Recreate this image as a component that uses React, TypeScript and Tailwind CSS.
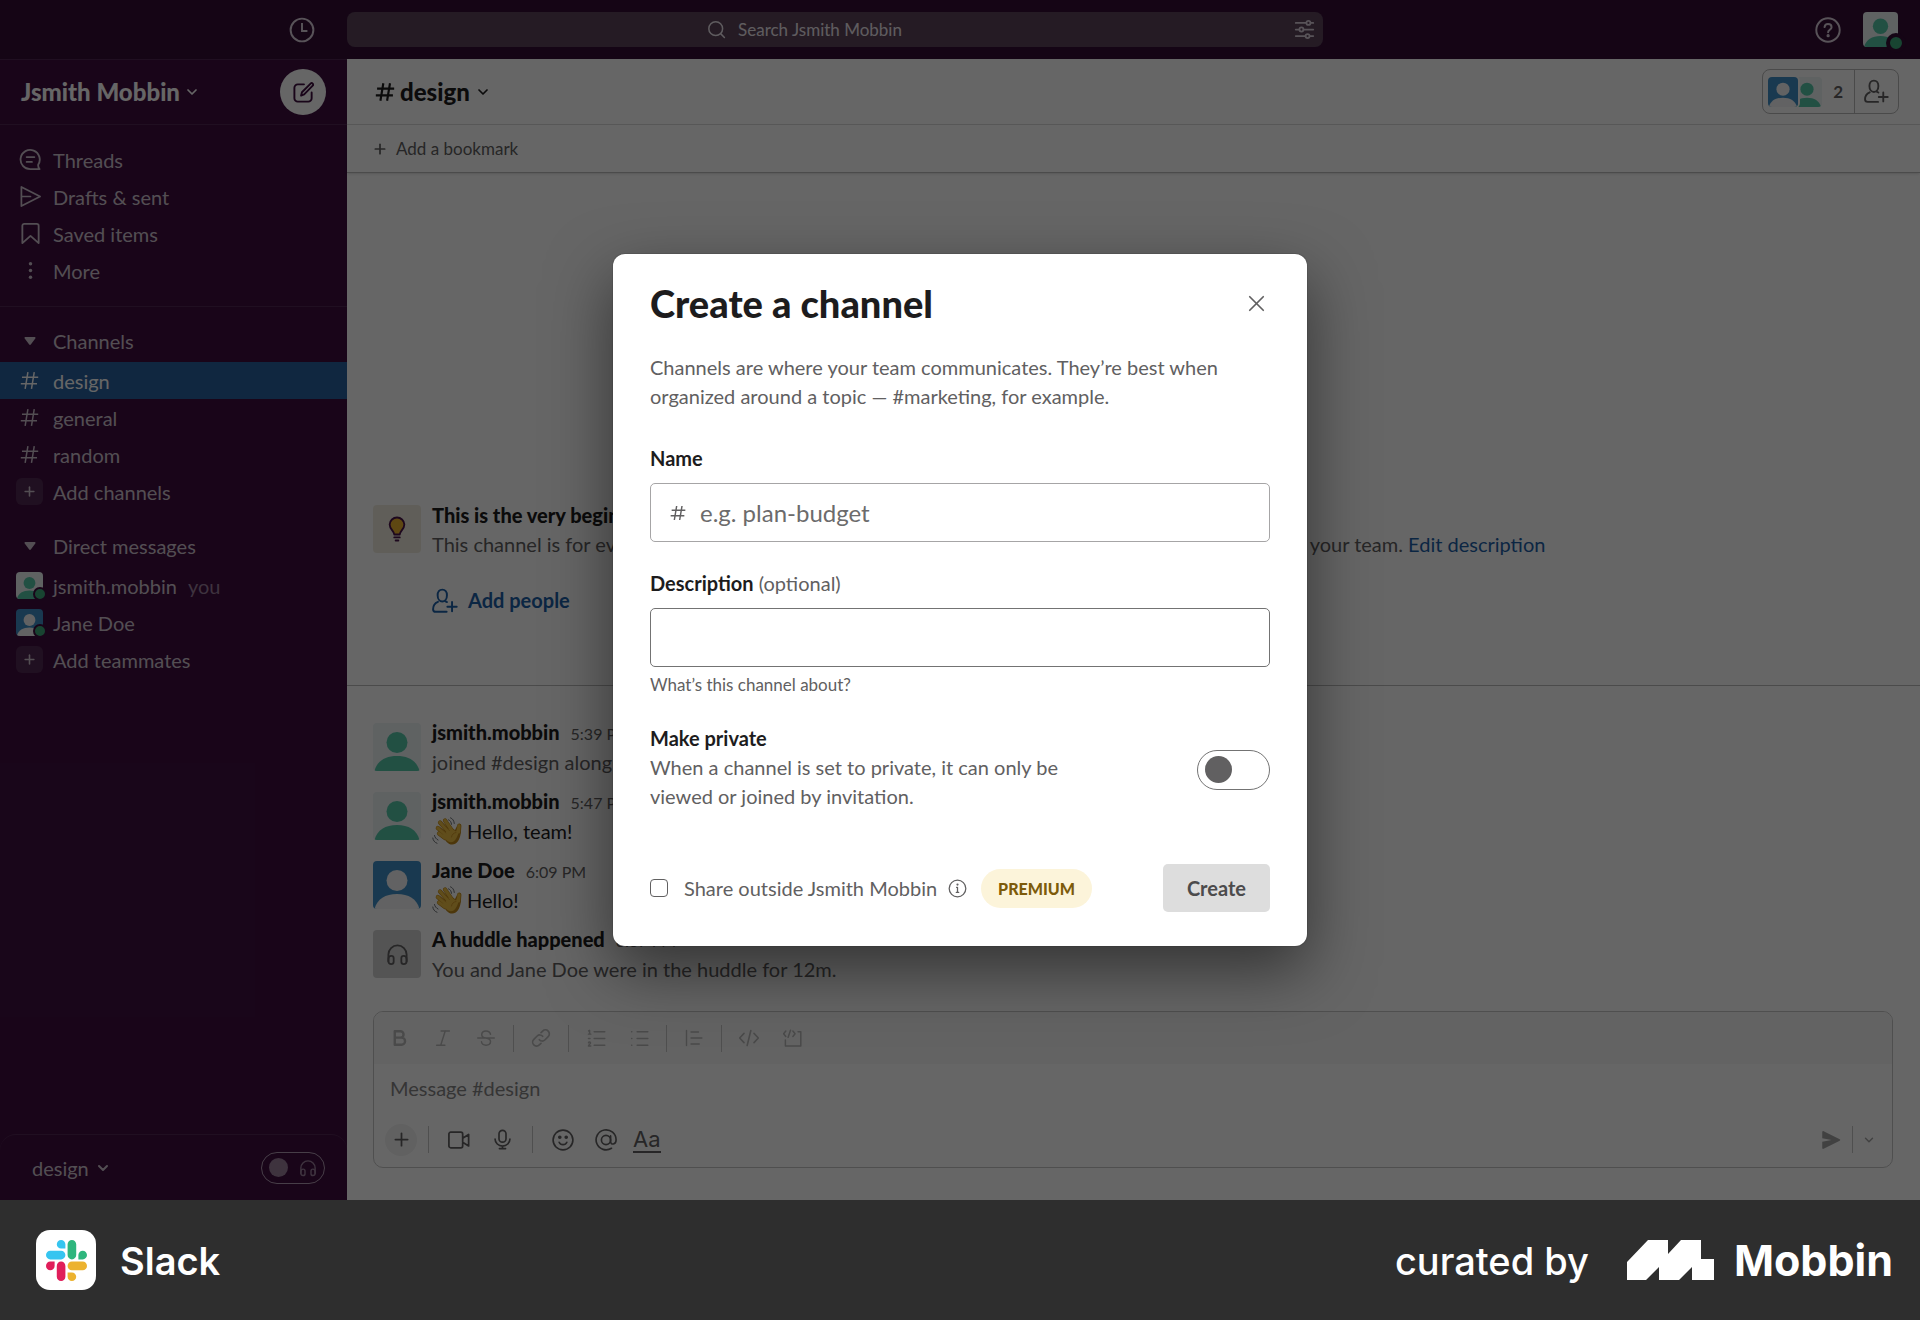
import React from 'react';
import { ChevronDown, Plus, X } from 'lucide-react';

type IconProps = { className?: string };

function Svg({
  className,
  box = 24,
  width = 2,
  children,
}: {
  className?: string;
  box?: number;
  width?: number;
  children: React.ReactNode;
}) {
  return (
    <svg
      className={className}
      viewBox={`0 0 ${box} ${box}`}
      fill="none"
      stroke="currentColor"
      strokeWidth={width}
      strokeLinecap="round"
      strokeLinejoin="round"
      aria-hidden="true"
    >
      {children}
    </svg>
  );
}

const ClockIcon = ({ className }: IconProps) => (
  <Svg className={className} width={1.8}>
    <circle cx="12" cy="12" r="10.5" />
    <path d="M12 5.5V13h5" strokeLinecap="butt" strokeLinejoin="miter" />
  </Svg>
);

const SearchIcon = ({ className }: IconProps) => (
  <Svg className={className} width={1.9}>
    <circle cx="11" cy="11" r="8.7" />
    <path d="M17.5 17.5 22 22" />
  </Svg>
);

const FilterIcon = ({ className }: IconProps) => (
  <Svg className={className} width={2}>
    <path d="M2 4.5h12M19 4.5h3M2 12h4M11 12h11M2 19.5h11M18 19.5h4" />
    <circle cx="16.5" cy="4.5" r="2.3" />
    <circle cx="8.5" cy="12" r="2.3" />
    <circle cx="15.5" cy="19.5" r="2.3" />
  </Svg>
);

const HelpIcon = ({ className }: IconProps) => (
  <Svg className={className} width={1.8}>
    <circle cx="12" cy="12" r="10.8" />
    <path d="M8.8 9.3A3.2 3.2 0 0 1 12 6.5c1.900 0 3.300 1.200 3.300 2.900 0 2.300-3.200 2.500-3.200 4.700" />
    <circle cx="12.100" cy="17.300" r="0.600" fill="currentColor" />
  </Svg>
);

const ComposeIcon = ({ className }: IconProps) => (
  <Svg className={className} width={2}>
    <path d="M12.500 3.500H6a3.500 3.500 0 0 0-3.500 3.500v11A3.500 3.500 0 0 0 6 21.500h11a3.500 3.500 0 0 0 3.500-3.500v-6" />
    <path d="M9.500 15.200l.9-3.500 9-9a1.500 1.500 0 0 1 2.200 2.200l-8.900 9.100z" />
  </Svg>
);

const ThreadsIcon = ({ className }: IconProps) => (
  <Svg className={className} width={1.9}>
    <path d="M20 17.500A10 10 0 1 0 12 22h9.500s-1.700-1.500-1.500-4.500z" />
    <path d="M8 9.500h8M8 14.500h5.500" />
  </Svg>
);

const SentIcon = ({ className }: IconProps) => (
  <Svg className={className} width={1.800}>
    <path d="M2.500 2 22 12 2.500 22zM3 12h9" />
  </Svg>
);

const BookmarkIcon = ({ className }: IconProps) => (
  <Svg className={className} width={1.900}>
    <path d="M3.500 22V4A2 2 0 0 1 5.500 2h13a2 2 0 0 1 2 2v18L12 14.500z" />
  </Svg>
);

const DotsIcon = ({ className }: IconProps) => (
  <svg className={className} viewBox="0 0 24 24" fill="currentColor" aria-hidden="true">
    <circle cx="12" cy="5" r="1.800" />
    <circle cx="12" cy="12" r="1.800" />
    <circle cx="12" cy="19" r="1.800" />
  </svg>
);

const HashIcon = ({ className, weight = 1.900 }: IconProps & { weight?: number }) => (
  <Svg className={className} width={weight}>
    <path d="M10 1.500l-3.500 21M18 1.500l-3.500 21M2.500 8h20.500M1 16h20.500" strokeLinecap="butt" />
  </Svg>
);

const CaretIcon = ({ className }: IconProps) => (
  <svg className={className} viewBox="0 0 12 8" aria-hidden="true">
    <path d="M1.500 0h9c.9 0 1.300.9.8 1.600L7 7.200a1.200 1.200 0 0 1-2 0L.7 1.600C.2.900.6 0 1.500 0z" fill="currentColor" />
  </svg>
);

const PersonPlusIcon = ({ className }: IconProps) => (
  <Svg className={className} width={1.800}>
    <path d="M9.500 12.500c-2.400 0-4.300-2.500-4.300-5.800S6.800 1.500 9.500 1.500s4.300 1.900 4.300 5.200-1.900 5.800-4.300 5.800z" />
    <path d="M5.500 12.800C2.600 14 1 16.300 1 19.500c0 1.700 1 2.500 2.500 2.500h10M12.500 12.300l1.300.7M18.500 13v8.500M14.200 17.300h8.600" />
  </Svg>
);

const BulbIcon = ({ className }: IconProps) => (
  <svg className={className} viewBox="0 0 24 28" aria-hidden="true">
    <path
      d="M9 20c0-4-5-5.500-5-11a8 8 0 0 1 8-7.500A8 8 0 0 1 20 9c0 5.500-5 7-5 11z"
      fill="#ecb22e"
      stroke="#4a154b"
      strokeWidth="2"
      strokeLinejoin="round"
    />
    <path d="M9 23.200h6M10.500 26.500h3" stroke="#4a154b" strokeWidth="2" strokeLinecap="round" />
  </svg>
);

const HeadphonesIcon = ({ className }: IconProps) => (
  <Svg className={className} width={1.900}>
    <path d="M2.500 19v-7a9.500 9.500 0 0 1 19 0v7" />
    <path d="M2.500 17c0-2 1-3.500 3-3.500s2.500 1 2.500 2.500v3.500c0 1.500-.7 2.500-2.500 2.500s-3-1.200-3-3zM21.500 17c0-2-1-3.500-3-3.500S16 14.500 16 16v3.500c0 1.500.7 2.500 2.500 2.500s3-1.200 3-3z" />
  </Svg>
);

const BoldIcon = ({ className }: IconProps) => (
  <Svg className={className} width={3.200}>
    <path d="M5 3h7.500a4.200 4.200 0 0 1 0 8.500H5zM5 11.500h9a4.700 4.700 0 0 1 0 9.500H5z" />
  </Svg>
);
const ItalicIcon = ({ className }: IconProps) => (
  <Svg className={className}>
    <path d="M9.500 2.500h11M3.500 21.500h11M15 2.500l-6 19" />
  </Svg>
);
const StrikeIcon = ({ className }: IconProps) => (
  <Svg className={className}>
    <path d="M18 7c-.5-2.500-2.800-4.500-6-4.500S6.300 4.500 6.300 7.500 9 11.500 12 12s6 1.700 6 4.700-2.800 4.800-6 4.800S6.300 19.500 6 17M1 12h22" />
  </Svg>
);
const LinkIcon = ({ className }: IconProps) => (
  <Svg className={className}>
    <path d="M10 14a4.500 4.500 0 0 0 6.600.4l4-4A4.700 4.700 0 0 0 14 3.700L12 5.600M14 10a4.500 4.500 0 0 0-6.600-.4l-4 4a4.700 4.700 0 0 0 6.600 6.700l2-1.900" />
  </Svg>
);
const OrderedIcon = ({ className }: IconProps) => (
  <Svg className={className} width={1.800}>
    <path d="M9 3.500h13.500M9 12h13.500M9 20.500h13.500M2 2.500l1.300-.8V6.500M1.800 6.500h3M1.800 17.500c.3-1.500 2.700-1.400 2.700.1 0 1.100-2.700 2.400-2.700 3.900h3M1.800 12h2" />
  </Svg>
);
const BulletIcon = ({ className }: IconProps) => (
  <Svg className={className} width={1.900}>
    <path d="M9 3.500h13.500M9 12h13.500M9 20.500h13.500M2 3.500h.3M2 12h.3M2 20.500h.3" />
  </Svg>
);
const QuoteIcon = ({ className }: IconProps) => (
  <Svg className={className} width={1.900}>
    <path d="M2 2v20M8 4h10M8 12h14.500M8 20h11" />
  </Svg>
);
const CodeIcon = ({ className }: IconProps) => (
  <Svg className={className} width={1.900}>
    <path d="M6 6.500.8 12 6 17.500M18 6.500l5.200 5.500-5.200 5.500M14.200 3 9.800 21" />
  </Svg>
);
const CodeBlockIcon = ({ className }: IconProps) => (
  <Svg className={className} width={1.900}>
    <path d="M3.500 2.500.8 6l2.700 3.500M12.500 2.500 15.200 6l-2.700 3.500M9.500 1.500l-3 9M19 3.500h3.500v18H3V14" />
  </Svg>
);
const VideoIcon = ({ className }: IconProps) => (
  <Svg className={className} width={1.900}>
    <path d="M3 3.500h11a2 2 0 0 1 2 2v13a2 2 0 0 1-2 2H3a2 2 0 0 1-2-2v-13a2 2 0 0 1 2-2zM16 10l6.500-4v12.500L16 14.500" />
  </Svg>
);
const MicIcon = ({ className }: IconProps) => (
  <Svg className={className} width={1.900}>
    <rect x="8" y="1.500" width="8" height="13.500" rx="4" />
    <path d="M3.500 11.500a8.500 8 0 0 0 17 0M12 19.500v3M8.500 22.500h7" />
  </Svg>
);
const SmileIcon = ({ className }: IconProps) => (
  <Svg className={className} width={1.800}>
    <circle cx="12" cy="12" r="10.800" />
    <path d="M7.800 14.500c1.500 3.500 6.900 3.500 8.400 0" />
    <circle cx="8.500" cy="9" r="1.100" fill="currentColor" />
    <circle cx="15.500" cy="9" r="1.100" fill="currentColor" />
  </Svg>
);
const AtIcon = ({ className }: IconProps) => (
  <Svg className={className} width={1.800}>
    <circle cx="12" cy="12" r="5" />
    <path d="M17 7.500v6.200c0 4 6 3.500 6-1.700A10.900 10.900 0 1 0 18 21" />
  </Svg>
);
const SendIcon = ({ className }: IconProps) => (
  <svg className={className} viewBox="0 0 24 24" fill="currentColor" aria-hidden="true">
    <path d="M1.500 2.500c0-1 .8-1.500 1.700-1L22.500 11.200c.8.400.8 1.200 0 1.600L3.200 22.500c-.9.500-1.700 0-1.700-1V14l11-2-11-2z" />
  </svg>
);
const InfoIcon = ({ className }: IconProps) => (
  <Svg className={className} width={1.600}>
    <circle cx="12" cy="12" r="10.500" />
    <path d="M10.800 10.500H12V17M10.500 17h3" />
    <circle cx="12" cy="7" r="0.600" fill="currentColor" />
  </Svg>
);

const WaveIcon = ({ className }: IconProps) => (
  <svg className={className} viewBox="0 0 30 30" fill="none" strokeLinecap="round" aria-hidden="true">
    <g stroke="#c08a1d" strokeWidth="4.200">
      <path d="M14.500 18 5.800 11M17 15.500 8 5.500M19.500 13 13 3.500M13 21 7 16.500" />
      <path d="M26.800 15 27.300 8.500" />
    </g>
    <path d="M10 19 18 9.500l5 3.500 2-4c3-1 4.200 1 4 4-.2 6-1.800 11-5.300 13.500-3 2-6.500 1.200-9-1.500z" fill="#c08a1d" />
    <g stroke="#f0c044" strokeWidth="3.200">
      <path d="M14.500 18 5.800 11M17 15.500 8 5.500M19.500 13 13 3.500M13 21 7 16.500" />
      <path d="M26.500 15 27 8.800" />
    </g>
    <path d="M10.500 18.500 18 10.500l6 4 1.500-4c2 0 1.700 9-3.500 13.800-3 1.700-6 .700-8-1.600z" fill="#f0c044" />
    <path d="M8 10.800 14 16M12 7.700l5.500 6" stroke="#cf9424" strokeWidth="0.700" />
    <path d="M19.500 20c.3-2.500 2-4 4.500-4.500" stroke="#cf9424" strokeWidth="0.900" />
    <path d="M18.500 0.800c2.200.800 3.500 2.800 3.800 5.700M16.500 2.800c1.800.700 2.800 2.300 3 4.500M0.800 21c.3 2.500 1.700 4.300 4.200 5.300M2.500 18.500c.4 2 1.600 3.500 3.500 4.500" stroke="#5f6368" strokeWidth="0.900" />
  </svg>
);

function Avatar({ tone, className }: { tone: 'teal' | 'blue'; className?: string }) {
  const back = tone === 'teal' ? '#edf4f6' : '#3f8fc8';
  const front = tone === 'teal' ? '#55c7a9' : '#f4f6f7';
  return (
    <svg className={className} viewBox="0 0 48 48" role="img" aria-label="avatar">
      <rect width="48" height="48" fill={back} />
      <circle cx="24" cy="19.500" r="10.500" fill={front} />
      <path d="M1.500 48C4 38 12.500 33 24 33s20 5 22.500 15z" fill={front} />
    </svg>
  );
}

const navItems = [
  { label: 'Threads', Icon: ThreadsIcon },
  { label: 'Drafts & sent', Icon: SentIcon },
  { label: 'Saved items', Icon: BookmarkIcon },
  { label: 'More', Icon: DotsIcon },
];

function SideRow({ icon, children, active }: { icon: React.ReactNode; children: React.ReactNode; active?: boolean }) {
  return (
    <button
      type="button"
      className={
        active
          ? 'flex h-[37px] w-full items-center bg-[#2861a0] text-left text-white'
          : 'flex h-[37px] w-full items-center text-left'
      }
    >
      <span className="flex w-[53px] shrink-0 items-center pl-4">{icon}</span>
      <span>{children}</span>
    </button>
  );
}

function PlusTile() {
  return (
    <span className="flex size-[27px] items-center justify-center rounded-md bg-[#522a53]">
      <Plus className="size-[15px]" strokeWidth={2.5} />
    </span>
  );
}

function SmallAvatar({ tone }: { tone: 'teal' | 'blue' }) {
  return (
    <span className="relative block">
      <Avatar tone={tone} className="size-[27px] rounded" />
      <span className="absolute -right-1 -bottom-0.5 size-3.5 rounded-full border-2 border-[#3f0e40] bg-[#3daa7c]" />
    </span>
  );
}

function SideHeading({ children }: { children: React.ReactNode }) {
  return (
    <button type="button" className="mb-[3px] flex h-[37px] w-full items-center text-left">
      <span className="w-[53px] shrink-0 pl-6">
        <CaretIcon className="h-2 w-3" />
      </span>
      {children}
    </button>
  );
}

function Sidebar() {
  return (
    <aside className="flex w-[347px] shrink-0 flex-col bg-[#3f0e40] text-xl text-[#cfc3cf]">
      <div className="flex h-[66px] items-center justify-between border-t border-b border-[#522653] pr-[21px] pl-[21px]">
        <button type="button" className="flex items-center gap-1 text-2xl font-black text-white">
          Jsmith Mobbin
          <ChevronDown className="size-4" strokeWidth={2.600} />
        </button>
        <button
          type="button"
          aria-label="New message"
          className="flex size-[46px] items-center justify-center rounded-full bg-white text-[#3f0e40]"
        >
          <ComposeIcon className="size-[23px]" />
        </button>
      </div>
      <nav className="border-b border-[#522653] pt-4 pb-[17px]" aria-label="Workspace">
        {navItems.map(({ label, Icon }) => (
          <SideRow key={label} icon={<Icon className="ml-[3px] size-[23px]" />}>
            {label}
          </SideRow>
        ))}
      </nav>
      <nav className="pt-[15px]" aria-label="Channels">
        <SideHeading>Channels</SideHeading>
        {['design', 'general', 'random'].map((name) => (
          <SideRow key={name} active={name === 'design'} icon={<HashIcon className="ml-1 size-[19px]" />}>
            {name}
          </SideRow>
        ))}
        <SideRow icon={<PlusTile />}>Add channels</SideRow>
      </nav>
      <nav className="pt-[17px]" aria-label="Direct messages">
        <SideHeading>Direct messages</SideHeading>
        <SideRow icon={<SmallAvatar tone="teal" />}>
          jsmith.mobbin<span className="ml-[11px] text-[#9b7f9c]">you</span>
        </SideRow>
        <SideRow icon={<SmallAvatar tone="blue" />}>Jane Doe</SideRow>
        <SideRow icon={<PlusTile />}>Add teammates</SideRow>
      </nav>
      <div className="mt-auto flex h-[66px] items-center justify-between rounded-t-2xl border-t border-[#522653] pr-[22px] pl-8">
        <button type="button" className="flex items-center gap-1.5">
          design
          <ChevronDown className="size-4" strokeWidth={3} />
        </button>
        <button
          type="button"
          role="switch"
          aria-checked="false"
          aria-label="Huddle"
          className="flex h-8 w-16 items-center justify-between rounded-full border border-[#b29bb3] px-[7px] text-[#9b7f9c]"
        >
          <span className="size-[19px] rounded-full bg-current" />
          <HeadphonesIcon className="size-[18px]" />
        </button>
      </div>
    </aside>
  );
}

function TopBar() {
  return (
    <header className="flex h-[59px] shrink-0 items-center bg-[#350d36] text-[#dccfdd]">
      <div className="flex w-[347px] shrink-0 justify-end pr-8">
        <button type="button" aria-label="History">
          <ClockIcon className="block size-[26px]" />
        </button>
      </div>
      <div className="flex h-[35px] w-[976px] items-center rounded-lg bg-[#5c455b] pr-2">
        <button type="button" className="flex flex-1 items-center justify-center gap-3 text-[17px] text-[#eee6ee]">
          <SearchIcon className="size-[19px]" />
          Search Jsmith Mobbin
        </button>
        <button type="button" aria-label="Search filters" className="pl-8">
          <FilterIcon className="block size-[21px]" />
        </button>
      </div>
      <div className="ml-auto flex items-center gap-[22px] pr-[22px]">
        <button type="button" aria-label="Help">
          <HelpIcon className="block size-[26px]" />
        </button>
        <button type="button" aria-label="Profile" className="relative">
          <Avatar tone="teal" className="block size-[35px] rounded" />
          <span className="absolute -right-2 -bottom-1.5 size-5 rounded-full border-4 border-[#350d36] bg-[#3daa7c]" />
        </button>
      </div>
    </header>
  );
}

function ChannelHeader() {
  return (
    <>
      <div className="flex h-[66px] shrink-0 items-center justify-between border-b border-[#dddddd] pr-[21px] pl-7">
        <button type="button" className="flex items-center gap-[5px] text-2xl font-black text-[#1d1c1d]">
          <HashIcon className="size-5" weight={2.600} />
          design
          <ChevronDown className="size-4" strokeWidth={2.600} />
        </button>
        <div className="flex h-[45px] items-stretch rounded-lg border border-[#b8b8b8] text-[17px] font-bold text-[#616061]">
          <button type="button" className="flex items-center px-[5px]">
            <Avatar tone="blue" className="relative size-[30px] rounded ring-2 ring-white" />
            <Avatar tone="teal" className="-ml-1.5 size-[30px] rounded" />
            <span className="pr-1.5 pl-[11px]">2</span>
          </button>
          <button type="button" aria-label="Add people" className="flex items-center border-l border-[#b8b8b8] px-[9px]">
            <PersonPlusIcon className="size-[25px]" />
          </button>
        </div>
      </div>
      <div className="flex h-12 shrink-0 items-center border-b border-[#bbbbbb] pl-[25px] shadow-sm">
        <button type="button" className="flex items-center gap-2 text-[17px] text-[#616061]">
          <Plus className="size-4" strokeWidth={2.600} />
          Add a bookmark
        </button>
      </div>
    </>
  );
}

type Message = { name: string; time: string; body: React.ReactNode; avatar: React.ReactNode };

const messages: Message[] = [
  {
    name: 'jsmith.mobbin',
    time: '5:39 PM',
    avatar: <Avatar tone="teal" className="size-12 rounded" />,
    body: <span className="text-[#616061]">joined #design along with Jane Doe.</span>,
  },
  {
    name: 'jsmith.mobbin',
    time: '5:47 PM',
    avatar: <Avatar tone="teal" className="size-12 rounded" />,
    body: (
      <>
        <WaveIcon className="size-[30px]" />
        Hello, team!
      </>
    ),
  },
  {
    name: 'Jane Doe',
    time: '6:09 PM',
    avatar: <Avatar tone="blue" className="size-12 rounded" />,
    body: (
      <>
        <WaveIcon className="size-[30px]" />
        Hello!
      </>
    ),
  },
  {
    name: 'A huddle happened',
    time: '6:37 PM',
    avatar: (
      <span className="flex size-12 items-center justify-center rounded bg-[#d2d2d2] text-[#616061]">
        <HeadphonesIcon className="size-[23px]" />
      </span>
    ),
    body: <span className="text-[#616061]">You and Jane Doe were in the huddle for 12m.</span>,
  },
];

function Feed() {
  return (
    <section className="flex flex-1 flex-col justify-end text-xl leading-[29px] text-[#1d1c1d]">
      <div className="flex gap-[11px] border-b border-[#bbbbbb] px-[26px] pb-[70px]">
        <span className="mt-1 flex size-12 shrink-0 items-center justify-center rounded bg-[#f1ecdf]">
          <BulbIcon className="h-[26px] w-[22px]" />
        </span>
        <div className="whitespace-nowrap">
          <h2 className="font-black">
            This is the very beginning of the <span>#design</span> channel
          </h2>
          <p className="text-[#616061]">
            This channel is for everything #design. Hold meetings, share docs, and make decisions together with your
            team.{' '}
            <a href="#description" className="text-[#1d60a8]">
              Edit description
            </a>
          </p>
          <button type="button" className="mt-[27px] flex items-center gap-2.5 font-bold text-[#1d60a8]">
            <PersonPlusIcon className="size-[26px]" />
            Add people
          </button>
        </div>
      </div>
      <ul className="pt-8 pb-[17px]">
        {messages.map((m) => (
          <li key={m.time} className="flex h-[69px] gap-[11px] px-[26px]">
            <span className="mt-[5px] shrink-0">{m.avatar}</span>
            <div>
              <div className="flex items-baseline gap-[11px]">
                <span className="font-black">{m.name}</span>
                <span className="text-base leading-[29px] text-[#616061]">{m.time}</span>
              </div>
              <div className="flex h-[29px] items-center gap-[5px]">{m.body}</div>
            </div>
          </li>
        ))}
      </ul>
    </section>
  );
}

function ToolButton({ label, children }: { label: string; children: React.ReactNode }) {
  return (
    <button type="button" aria-label={label} className="flex size-8 items-center justify-center">
      {children}
    </button>
  );
}

const Rule = () => <span className="h-[27px] w-px bg-[#c6c6c6]" />;

function Composer() {
  return (
    <form className="mr-[27px] mb-8 ml-[26px] shrink-0 rounded-[10px] border border-[#c6c6c6]">
      <div className="flex h-[52px] items-center rounded-t-[9px] bg-[#f8f8f8] px-2.5 text-[#b8b8b8]">
        <div className="flex items-center gap-[11px] pr-[11px]">
          <ToolButton label="Bold"><BoldIcon className="size-[18px]" /></ToolButton>
          <ToolButton label="Italic"><ItalicIcon className="size-[18px]" /></ToolButton>
          <ToolButton label="Strikethrough"><StrikeIcon className="size-[18px]" /></ToolButton>
        </div>
        <Rule />
        <div className="px-[11px]">
          <ToolButton label="Link"><LinkIcon className="size-[20px]" /></ToolButton>
        </div>
        <Rule />
        <div className="flex items-center gap-[11px] px-[11px]">
          <ToolButton label="Ordered list"><OrderedIcon className="size-[19px]" /></ToolButton>
          <ToolButton label="Bulleted list"><BulletIcon className="size-[19px]" /></ToolButton>
        </div>
        <Rule />
        <div className="px-[11px]">
          <ToolButton label="Quote"><QuoteIcon className="size-[18px]" /></ToolButton>
        </div>
        <Rule />
        <div className="flex items-center gap-[11px] px-[11px]">
          <ToolButton label="Code"><CodeIcon className="size-[20px]" /></ToolButton>
          <ToolButton label="Code block"><CodeBlockIcon className="size-[19px]" /></ToolButton>
        </div>
      </div>
      <input
        type="text"
        aria-label="Message #design"
        placeholder="Message #design"
        className="block h-12 w-full px-4 text-xl outline-none placeholder:text-[#868586]"
      />
      <div className="flex h-[55px] items-center pr-3 pl-[11px] text-[#616061]">
        <button type="button" aria-label="Attach" className="flex size-8 items-center justify-center rounded-full bg-[#f2f2f2]">
          <Plus className="size-[21px]" strokeWidth={2} />
        </button>
        <span className="ml-[11px] h-[27px] w-px bg-[#c6c6c6]" />
        <div className="flex items-center gap-[11px] px-3.5">
          <ToolButton label="Video clip"><VideoIcon className="size-[22px]" /></ToolButton>
          <ToolButton label="Audio clip"><MicIcon className="size-[21px]" /></ToolButton>
        </div>
        <Rule />
        <div className="flex items-center gap-[11px] px-3.5">
          <ToolButton label="Emoji"><SmileIcon className="size-[22px]" /></ToolButton>
          <ToolButton label="Mention"><AtIcon className="size-[22px]" /></ToolButton>
          <button type="button" aria-label="Formatting" className="border-b-2 border-[#616061] font-['Inter',sans-serif] text-[22px] leading-6">
            Aa
          </button>
        </div>
        <div className="ml-auto flex items-center gap-[5px] text-[#a4a4a4]">
          <ToolButton label="Send"><SendIcon className="size-5" /></ToolButton>
          <Rule />
          <button type="button" aria-label="Schedule" className="px-1">
            <ChevronDown className="block size-[14px]" strokeWidth={2.500} />
          </button>
        </div>
      </div>
    </form>
  );
}

function CreateChannelDialog() {
  return (
    <div
      role="dialog"
      aria-modal="true"
      aria-labelledby="dialog-title"
      className="w-full max-w-[694px] rounded-xl bg-white px-[37px] pt-[26px] pb-[34px] text-xl leading-[29px] text-[#616061] shadow-[0_0_0_1px_rgba(29,28,29,0.13),0_24px_64px_rgba(0,0,0,0.5)]"
    >
      <div className="flex items-center justify-between">
        <h1 id="dialog-title" className="text-[38px] leading-[46px] font-black text-[#1d1c1d]">
          Create a channel
        </h1>
        <button type="button" aria-label="Close" className="flex size-[27px] items-center justify-center">
          <X className="size-[27px]" strokeWidth={1.500} />
        </button>
      </div>
      <p className="mt-[27px]">
        Channels are where your team communicates. They’re best when organized around a topic — #marketing, for
        example.
      </p>
      <form>
        <label htmlFor="channel-name" className="mt-[33px] block font-bold text-[#1d1c1d]">
          Name
        </label>
        <div className="mt-2.5 flex h-[59px] items-center gap-3.5 rounded-[5px] border border-[#a6a5a6] pl-[19px] text-2xl">
          <HashIcon className="size-4" weight={2.200} />
          <input
            id="channel-name"
            type="text"
            placeholder="e.g. plan-budget"
            className="h-full flex-1 outline-none placeholder:text-[#6c6b6c]"
          />
        </div>
        <label htmlFor="channel-description" className="mt-[27px] block">
          <span className="font-bold text-[#1d1c1d]">Description</span> (optional)
        </label>
        <input
          id="channel-description"
          type="text"
          className="mt-2.5 block h-[59px] w-full rounded-[5px] border border-[#737373] px-4 text-2xl outline-none"
        />
        <p className="mt-[3px] text-[17px] leading-[29px]">What’s this channel about?</p>
        <div className="mt-[25px] flex items-center justify-between">
          <div className="max-w-[420px]">
            <h2 id="private-label" className="font-bold text-[#1d1c1d]">
              Make private
            </h2>
            <p>When a channel is set to private, it can only be viewed or joined by invitation.</p>
          </div>
          <button
            type="button"
            role="switch"
            aria-checked="false"
            aria-labelledby="private-label"
            className="mt-1 flex h-10 w-[73px] items-center rounded-full border border-[#737373] px-[7px]"
          >
            <span className="size-[27px] rounded-full bg-[#616061]" />
          </button>
        </div>
        <div className="mt-[53px] flex items-center">
          <input
            id="share-outside"
            type="checkbox"
            className="size-[18px] appearance-none rounded-[4px] border border-[#616061]"
          />
          <label htmlFor="share-outside" className="ml-4">
            Share outside Jsmith Mobbin
          </label>
          <InfoIcon className="ml-[11px] size-[19px]" />
          <span className="ml-3.5 rounded-full bg-[#fcf4da] px-[17px] py-[5px] text-base leading-[29px] font-black text-[#7d5b0a]">
            PREMIUM
          </span>
          <button type="submit" className="ml-auto h-12 rounded-[5px] bg-[#dddddd] px-6 font-bold text-[#4c4b4c]">
            Create
          </button>
        </div>
      </form>
    </div>
  );
}

const SlackMark = ({ className }: IconProps) => (
  <svg className={className} viewBox="0 0 122.800 122.800" aria-hidden="true">
    <path fill="#e01e5a" d="M25.800 77.600c0 7.100-5.800 12.900-12.900 12.900S0 84.700 0 77.600s5.800-12.900 12.900-12.900h12.900zM32.300 77.600c0-7.100 5.800-12.900 12.900-12.900s12.900 5.800 12.900 12.900v32.300c0 7.100-5.800 12.900-12.900 12.900s-12.900-5.800-12.900-12.900z" />
    <path fill="#36c5f0" d="M45.200 25.800c-7.100 0-12.900-5.800-12.900-12.900S38.100 0 45.200 0s12.900 5.800 12.900 12.900v12.900zM45.200 32.300c7.100 0 12.900 5.800 12.900 12.900s-5.800 12.900-12.900 12.900H12.900C5.800 58.100 0 52.300 0 45.200s5.800-12.900 12.900-12.900z" />
    <path fill="#2eb67d" d="M97 45.200c0-7.100 5.800-12.900 12.900-12.900s12.900 5.800 12.900 12.900-5.800 12.900-12.900 12.900H97zM90.500 45.200c0 7.100-5.800 12.900-12.900 12.900s-12.900-5.800-12.900-12.900V12.900C64.700 5.800 70.500 0 77.600 0s12.900 5.800 12.900 12.900z" />
    <path fill="#ecb22e" d="M77.600 97c7.100 0 12.900 5.800 12.900 12.900s-5.800 12.900-12.900 12.900-12.900-5.800-12.900-12.900V97zM77.600 90.500c-7.100 0-12.900-5.800-12.900-12.900s5.800-12.900 12.900-12.900h32.300c7.100 0 12.900 5.800 12.900 12.900s-5.800 12.900-12.900 12.900z" />
  </svg>
);

const MobbinMark = ({ className }: IconProps) => (
  <svg className={className} viewBox="0 0 87 40" fill="currentColor" aria-hidden="true">
    <path d="M0 22 21 0h20v14L54 0h20v19h13v21H65V27L52 40H32V27L19 40H0z" />
  </svg>
);

function CreditBar() {
  return (
    <footer className="flex h-[120px] shrink-0 items-center justify-between bg-[#2e2e2e] pr-[27px] pl-9 font-['Inter',sans-serif] text-white">
      <div className="flex items-center gap-6">
        <span className="flex size-[60px] items-center justify-center rounded-[14px] bg-white">
          <SlackMark className="size-[41px]" />
        </span>
        <span className="pt-0.5 text-[38px] leading-[46px] font-semibold">Slack</span>
      </div>
      <div className="flex items-center">
        <span className="pt-0.5 text-[38px] leading-[46px] font-medium">curated by</span>
        <MobbinMark className="mr-5 ml-[38px] h-10 w-[87px]" />
        <span className="text-[43px] leading-[46px] font-bold">Mobbin</span>
      </div>
    </footer>
  );
}

export default function App() {
  return (
    <div className="flex min-h-screen flex-col font-['Lato',sans-serif]">
      <div className="relative flex flex-1 flex-col">
        <TopBar />
        <div className="flex flex-1">
          <Sidebar />
          <main className="flex min-w-0 flex-1 flex-col bg-white">
            <ChannelHeader />
            <Feed />
            <Composer />
          </main>
        </div>
        <div className="absolute inset-0 flex items-center justify-center bg-black/60">
          <CreateChannelDialog />
        </div>
      </div>
      <CreditBar />
    </div>
  );
}
